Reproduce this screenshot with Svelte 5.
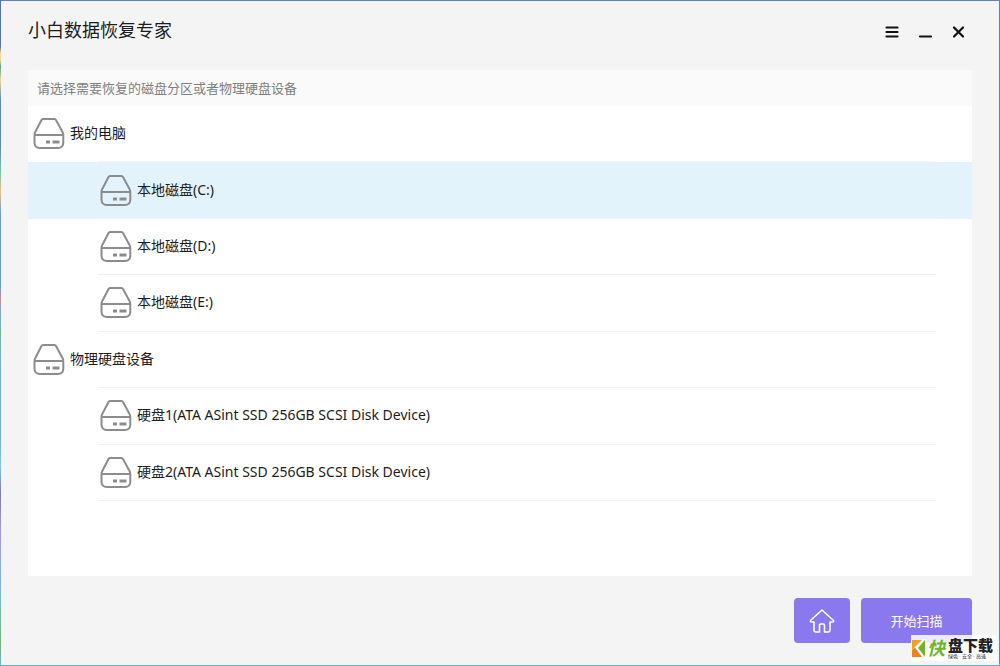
<script lang="ts">
	type Row = { id: string; name: string; level: number };

	const rows: Row[] = [
		{ id: 'pc', name: '我的电脑', level: 0 },
		{ id: 'c', name: '本地磁盘(C:)', level: 1 },
		{ id: 'd', name: '本地磁盘(D:)', level: 1 },
		{ id: 'e', name: '本地磁盘(E:)', level: 1 },
		{ id: 'hw', name: '物理硬盘设备', level: 0 },
		{ id: 'hd1', name: '硬盘1(ATA ASint SSD 256GB SCSI Disk Device)', level: 1 },
		{ id: 'hd2', name: '硬盘2(ATA ASint SSD 256GB SCSI Disk Device)', level: 1 }
	];

	let selected = $state('c');
</script>

<div class="desktop">
	<main class="window">
		<header>
			<h1>小白数据恢复专家</h1>
			<div class="controls">
				<button aria-label="菜单">
					<svg viewBox="0 0 16 16"><path d="M2.500 3.500h11M2.500 8h11M2.500 12.500h11" /></svg>
				</button>
				<button aria-label="最小化">
					<svg viewBox="0 0 16 16"><path d="M3 12.500h11" /></svg>
				</button>
				<button aria-label="关闭">
					<svg viewBox="0 0 16 16"><path d="M4 3.500l9 9M13 3.500l-9 9" /></svg>
				</button>
			</div>
		</header>

		<section class="panel">
			<p class="hint">请选择需要恢复的磁盘分区或者物理硬盘设备</p>
			<ul>
				{#each rows as row (row.id)}
					<li class:selected={selected === row.id}>
						<button
							class="row"
							class:child={row.level === 1}
							aria-pressed={selected === row.id}
							onclick={() => (selected = row.id)}
						>
							<svg class="disk" viewBox="0 0 32 32">
								<path d="M10 2h11.500q1 0 1.500 1L29.500 15q.8 1.500.8 3v7.500q0 5.500-5.500 5.500H7q-5.500 0-5.500-5.500V18q0-1.500.8-3L8.500 3q.5-1 1.500-1z" />
								<path d="M2 18h28" />
								<path class="leds" d="M13 25h4M19.500 25h7" />
							</svg>
							<span>{row.name}</span>
						</button>
					</li>
				{/each}
			</ul>
		</section>

		<footer>
			<button class="action home" aria-label="主页">
				<svg viewBox="0 0 26 26">
					<path d="M13 2L1.500 12.500q-.5 1.500 1 1.500H5v8q0 2 2 2h3.500v-7q0-1 1-1h3q1 0 1 1v7H19q2 0 2-2v-8h2.500q1.500 0 1-1.500z" />
				</svg>
			</button>
			<button class="action scan">开始扫描</button>
		</footer>
	</main>

	<div class="badge">
		<svg viewBox="0 0 13 18">
			<path d="M0 1h10L0 11z" fill="#f5a01b" />
			<path d="M0 11l4-3 6 10H0z" fill="#f0801c" />
			<path d="M13 1v17L6 9z" fill="#6fb52c" />
			<path d="M12 0L4 8.500l7 9.500" stroke="#fff" stroke-width="1.500" />
		</svg>
		<span class="fast">快</span>
		<span class="words">
			<b>盘下载</b>
			<small>绿色 · 安全 · 高速</small>
		</span>
	</div>
</div>

<style>
	:global(body) {
		background: #5c7db3;
	}
	.desktop {
		position: relative;
		box-sizing: border-box;
		min-height: 100vh;
		display: flex;
		padding: 1px;
		background: linear-gradient(
			#5874a8 0 7%,
			#f0d795 8% 9%,
			#5aa08c 10%,
			#f0d795 12%,
			#6289b5 15% 22%,
			#79c7ac 26%,
			#e8c084 29%,
			#6f9cc7 32% 43%,
			#c08a9d 45%,
			#7fa9d0 47%,
			#77b19b 50%,
			#7facd6 55% 66%,
			#8ac5d8 70%,
			#7b7cb0 74%,
			#a79ccf 80%,
			#7fb7d4 89%,
			#79b173 97%,
			#6cb2dc
		);
		font-family: 'Noto Sans', 'Noto Sans CJK SC', sans-serif;
		font-size: 13px;
		color: #1c1c1c;
	}
	.window {
		flex: 1;
		display: flex;
		flex-direction: column;
		box-sizing: border-box;
		padding: 0 26px 21px;
		background: #f4f4f4;
		border: 1px solid #e6f6fc;
		box-shadow: 1px -1px 0 #6182b8;
	}
	button {
		padding: 0;
		border: 0;
		background: none;
		font: inherit;
		color: inherit;
		cursor: pointer;
	}
	svg {
		display: block;
		fill: none;
		stroke-linecap: round;
		stroke-linejoin: round;
	}
	header {
		display: flex;
		align-items: center;
		justify-content: space-between;
		height: 60px;
		margin-bottom: 8px;
	}
	h1 {
		margin: 0;
		font-size: 18px;
		font-weight: 400;
		line-height: 56px;
		padding-bottom: 4px;
	}
	.controls {
		display: flex;
		gap: 17px;
		padding-right: 6px;
	}
	.controls svg {
		width: 16px;
		height: 16px;
		stroke: #111;
		stroke-width: 2.200;
	}
	.panel {
		flex: 1;
		display: flex;
		flex-direction: column;
		background: #fff;
	}
	.hint {
		margin: 0;
		padding-left: 9px;
		line-height: 36px;
		background: #fafafa;
		color: #808080;
	}
	ul {
		flex: 1;
		display: grid;
		grid-auto-rows: 1fr;
		margin: 0;
		padding: 0 0 75px;
		list-style: none;
	}
	li {
		position: relative;
		display: grid;
		min-height: 48px;
	}
	li::after {
		content: '';
		position: absolute;
		left: 70px;
		right: 37px;
		bottom: 0;
		border-bottom: 1px solid #f1f1f1;
	}
	.selected {
		background: #e3f3fb;
	}
	.selected::after,
	li:has(+ .selected)::after {
		border-color: #eef6fa;
	}
	.row {
		display: flex;
		align-items: center;
		gap: 5px;
		padding: 0 0 2px 5px;
		font-size: 14px;
		text-align: left;
	}
	.child {
		padding-left: 72px;
	}
	.disk {
		width: 32px;
		height: 32px;
		stroke: #8c8c8c;
		stroke-width: 2;
	}
	.leds {
		stroke-linecap: butt;
		stroke-width: 3;
	}
	.row span {
		padding-bottom: 2px;
	}
	footer {
		display: flex;
		justify-content: flex-end;
		gap: 11px;
		margin-top: 22px;
	}
	.action {
		display: grid;
		place-items: center;
		height: 45px;
		border-radius: 4px;
		background: #8a78ee;
		color: #fff;
	}
	.home {
		width: 56px;
	}
	.home svg {
		width: 26px;
		height: 26px;
		stroke: #fff;
		stroke-width: 1.600;
	}
	.scan {
		width: 111px;
	}
	.badge {
		position: absolute;
		right: 3px;
		bottom: 5px;
		display: flex;
		align-items: center;
		width: 86px;
		height: 26px;
		background: rgba(255, 255, 255, 0.85);
		color: #222;
	}
	.badge svg {
		width: 13px;
		height: 18px;
		margin: 0 2px 0 1px;
	}
	.fast {
		font-size: 18px;
		font-weight: 700;
		font-style: italic;
		line-height: 24px;
		color: #6fb52c;
	}
	.words {
		display: flex;
		flex-direction: column;
		margin-left: 3px;
		white-space: nowrap;
	}
	.words b {
		font-size: 15px;
		line-height: 16px;
		font-weight: 900;
	}
	.words small {
		font-size: 5px;
		line-height: 7px;
	}
</style>
